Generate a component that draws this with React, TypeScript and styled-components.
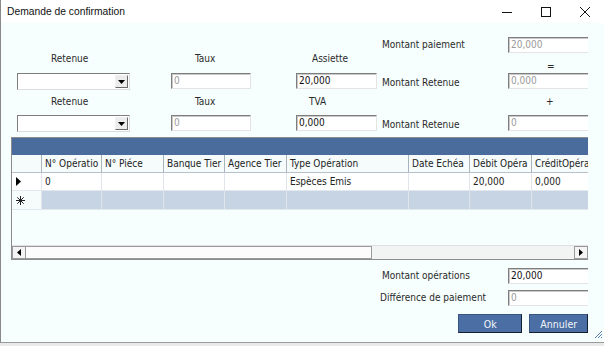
import React from 'react'
import styled, { createGlobalStyle } from 'styled-components'

const Global = createGlobalStyle`
  html, body {
    margin: 0;
    padding: 0;
    background: #e9e9e9;
  }
  body {
    font-family: 'DejaVu Sans Condensed', 'DejaVu Sans', sans-serif;
    font-size: 10px;
    color: #2a2a2a;
  }
`

const Window = styled.div`
  width: 604px;
  height: 343px;
  box-sizing: border-box;
  border-left: 1px solid #8a8a8a;
  border-bottom: 1px solid #9a9a9a;
  background: #f6fefe;
  display: flex;
  flex-direction: column;
  overflow: hidden;
`

const TitleBar = styled.div`
  height: 23px;
  flex: none;
  background: #ffffff;
  display: flex;
  align-items: center;
  padding-left: 6px;
  font-family: 'Liberation Sans', Arial, sans-serif;
  font-size: 10.3px;
  color: #111;
  .title {
    flex: 1;
  }
`

const Ctrl = styled.div`
  width: 39px;
  height: 23px;
  display: flex;
  align-items: center;
  justify-content: center;
`

const Panel = styled.div`
  width: 587px;
  flex: 1;
  overflow: hidden;
  display: flex;
  flex-direction: column;
  padding-top: 14px;
`

const Form = styled.div`
  display: grid;
  grid-template-columns: 154px 125px 86px 126px 100px;
  grid-template-rows: 16px 20px 16px 26px 16px;
  padding-left: 16px;
`

const Cell = styled.div<{ $indent?: number; $align?: string }>`
  padding-left: ${(p) => (p.$indent || 0) + 'px'};
  align-self: ${(p) => p.$align || 'center'};
  white-space: nowrap;
  line-height: 12px;
`

const Input = styled.div<{ $disabled?: boolean; $w?: number }>`
  box-sizing: border-box;
  width: ${(p) => (p.$w || 81) + 'px'};
  height: 16px;
  background: #fff;
  border-top: 1px solid #7e7e7e;
  border-left: 1px solid #7e7e7e;
  border-right: 1px solid #e4e4e4;
  border-bottom: 1px solid #e4e4e4;
  box-shadow: inset 1px 1px 0 #c9c9c9;
  padding-left: 2px;
  line-height: 14px;
  color: ${(p) => (p.$disabled ? '#9a9a9a' : '#111')};
  white-space: nowrap;
`

const Select = styled.div`
  box-sizing: border-box;
  width: 113px;
  height: 17px;
  background: #fff;
  border-top: 1px solid #7e7e7e;
  border-left: 1px solid #7e7e7e;
  border-right: 1px solid #dcdcdc;
  border-bottom: 1px solid #dcdcdc;
  display: flex;
  justify-content: flex-end;
  padding: 1px;
  .btn {
    width: 13px;
    box-sizing: border-box;
    border: 1px solid #f0f0f0;
    border-right-color: #6a6a6a;
    border-bottom-color: #6a6a6a;
    background: #ececec;
    display: flex;
    align-items: center;
    justify-content: center;
  }
`

const Spacer = styled.div``

const GridBox = styled.div`
  margin: 6px 0 0 10px;
  border: 1px solid #8c8c8c;
  border-right: none;
  height: 121px;
  display: flex;
  flex-direction: column;
  background: #f6fefe;
`

const GroupBand = styled.div`
  height: 17px;
  flex: none;
  background: #4a6c9c;
`

const Row = styled.div<{ $kind: 'head' | 'data' | 'new' }>`
  display: grid;
  flex: none;
  grid-template-columns: 30px 60px 62px 61px 62px 122px 61px 62px 80px;
  height: ${(p) => (p.$kind === 'new' ? 18 : 17) + 'px'};
  background: ${(p) =>
    p.$kind === 'head' ? '#f6fbfc' : p.$kind === 'data' ? '#ffffff' : '#c6d4e3'};
  border-bottom: 1px solid ${(p) => (p.$kind === 'head' ? '#b8c0c8' : '#e2e8ee')};
  & > div {
    border-right: 1px solid ${(p) => (p.$kind === 'head' ? '#aab2ba' : '#dfe5eb')};
    padding-left: 3px;
    overflow: hidden;
    white-space: nowrap;
    line-height: 17px;
    color: #222;
  }
  & > div:first-child {
    display: flex;
    align-items: center;
    padding-left: 4px;
    background: ${(p) => (p.$kind === 'new' ? '#f6fbfc' : 'transparent')};
  }
`

const Empty = styled.div`
  flex: 1;
`

const HScroll = styled.div`
  height: 13px;
  flex: none;
  display: flex;
  border-top: 1px solid #e0e0e0;
  background: #f2f4f4;
  .arrow {
    width: 14px;
    box-sizing: border-box;
    border: 1px solid #9a9a9a;
    background: #f4f4f4;
    display: flex;
    align-items: center;
    justify-content: center;
  }
  .thumb {
    width: 346px;
    box-sizing: border-box;
    border: 1px solid #9a9a9a;
    border-left: none;
    background: #fcfcfc;
  }
  .track {
    flex: 1;
  }
`

const Totals = styled.div`
  display: grid;
  grid-template-columns: 128px 100px;
  grid-template-rows: 16px 16px;
  row-gap: 6px;
  margin: 8px 0 0 379px;
  align-items: center;
`

const Buttons = styled.div`
  display: flex;
  gap: 7px;
  margin: 8px 0 0 457px;
`

const Button = styled.div<{ $w: number }>`
  width: ${(p) => p.$w + 'px'};
  height: 19px;
  box-sizing: border-box;
  background: #4b6fa4;
  border: 1px solid #3a5583;
  border-right-color: #15202f;
  border-bottom-color: #15202f;
  color: #f2f5fa;
  font-size: 10.5px;
  display: flex;
  align-items: center;
  justify-content: center;
`

const Grip = styled.svg`
  position: absolute;
  right: 1px;
  bottom: 4px;
`

const Arrow = ({ dir }: { dir: 'down' | 'left' | 'right' | 'row' }) => {
  const shapes = {
    down: { w: 7, h: 4, pts: '0,0 7,0 3.5,4' },
    left: { w: 4, h: 7, pts: '4,0 4,7 0,3.5' },
    right: { w: 4, h: 7, pts: '0,0 0,7 4,3.5' },
    row: { w: 5, h: 9, pts: '0,0 0,9 5,4.5' },
  }
  const s = shapes[dir]
  return (
    <svg width={s.w} height={s.h} viewBox={`0 0 ${s.w} ${s.h}`}>
      <polygon points={s.pts} fill="#000" />
    </svg>
  )
}

const NewRowMark = () => (
  <svg width="9" height="9" viewBox="0 0 9 9">
    <path d="M4.5 0V9M0 4.5H9M1.3 1.3L7.7 7.7M7.7 1.3L1.3 7.7" stroke="#222" strokeWidth="1" />
  </svg>
)

const cols = [
  'N° Opératio',
  'N° Piéce',
  'Banque Tier',
  'Agence Tier',
  'Type Opération',
  'Date Echéa',
  'Débit Opéra',
  'CréditOpéra',
]

const App = () => (
  <>
    <Global />
    <div style={{ position: 'relative' }}>
      <Window>
        <TitleBar>
          <span className="title">Demande de confirmation</span>
          <Ctrl>
            <svg width="10" height="10" viewBox="0 0 10 10">
              <line x1="0" y1="5.5" x2="10" y2="5.5" stroke="#111" strokeWidth="1" />
            </svg>
          </Ctrl>
          <Ctrl>
            <svg width="10" height="10" viewBox="0 0 10 10">
              <rect x="0.5" y="0.5" width="9" height="9" fill="none" stroke="#111" strokeWidth="1" />
            </svg>
          </Ctrl>
          <Ctrl>
            <svg width="10" height="10" viewBox="0 0 10 10">
              <path d="M0 0L10 10M10 0L0 10" stroke="#111" strokeWidth="1" />
            </svg>
          </Ctrl>
        </TitleBar>
        <Panel>
          <Form>
            <Spacer />
            <Spacer />
            <Spacer />
            <Cell>Montant paiement</Cell>
            <Input $disabled>20,000</Input>

            <Cell $indent={34} $align="start">Retenue</Cell>
            <Cell $indent={24} $align="start">Taux</Cell>
            <Cell $indent={16} $align="start">Assiette</Cell>
            <Spacer />
            <Cell $indent={39} $align="end">=</Cell>

            <Select>
              <div className="btn">
                <Arrow dir="down" />
              </div>
            </Select>
            <Input $disabled $w={80}>0</Input>
            <Input>20,000</Input>
            <Cell $align="end">Montant Retenue</Cell>
            <Input $disabled>0,000</Input>

            <Cell $indent={34}>Retenue</Cell>
            <Cell $indent={24}>Taux</Cell>
            <Cell $indent={13}>TVA</Cell>
            <Spacer />
            <Cell $indent={38}>+</Cell>

            <Select>
              <div className="btn">
                <Arrow dir="down" />
              </div>
            </Select>
            <Input $disabled $w={80}>0</Input>
            <Input>0,000</Input>
            <Cell $align="end">Montant Retenue</Cell>
            <Input $disabled>0</Input>
          </Form>

          <GridBox>
            <GroupBand />
            <Row $kind="head">
              <div />
              {cols.map((c) => (
                <div key={c}>{c}</div>
              ))}
            </Row>
            <Row $kind="data">
              <div>
                <Arrow dir="row" />
              </div>
              <div>0</div>
              <div />
              <div />
              <div />
              <div>Espèces Emis</div>
              <div />
              <div>20,000</div>
              <div>0,000</div>
            </Row>
            <Row $kind="new">
              <div>
                <NewRowMark />
              </div>
              <div />
              <div />
              <div />
              <div />
              <div />
              <div />
              <div />
              <div />
            </Row>
            <Empty />
            <HScroll>
              <div className="arrow">
                <Arrow dir="left" />
              </div>
              <div className="thumb" />
              <div className="track" />
              <div className="arrow">
                <Arrow dir="right" />
              </div>
            </HScroll>
          </GridBox>

          <Totals>
            <Cell $indent={2}>Montant opérations</Cell>
            <Input>20,000</Input>
            <Cell>Différence de paiement</Cell>
            <Input $disabled>0</Input>
          </Totals>

          <Buttons>
            <Button $w={65}>Ok</Button>
            <Button $w={59}>Annuler</Button>
          </Buttons>
        </Panel>
      </Window>
      <Grip width="9" height="9" viewBox="0 0 9 9">
        <path d="M8 1L1 8M8 4L4 8M8 7L7 8" stroke="#5b7fb5" strokeWidth="1" />
      </Grip>
    </div>
  </>
)

export default App
